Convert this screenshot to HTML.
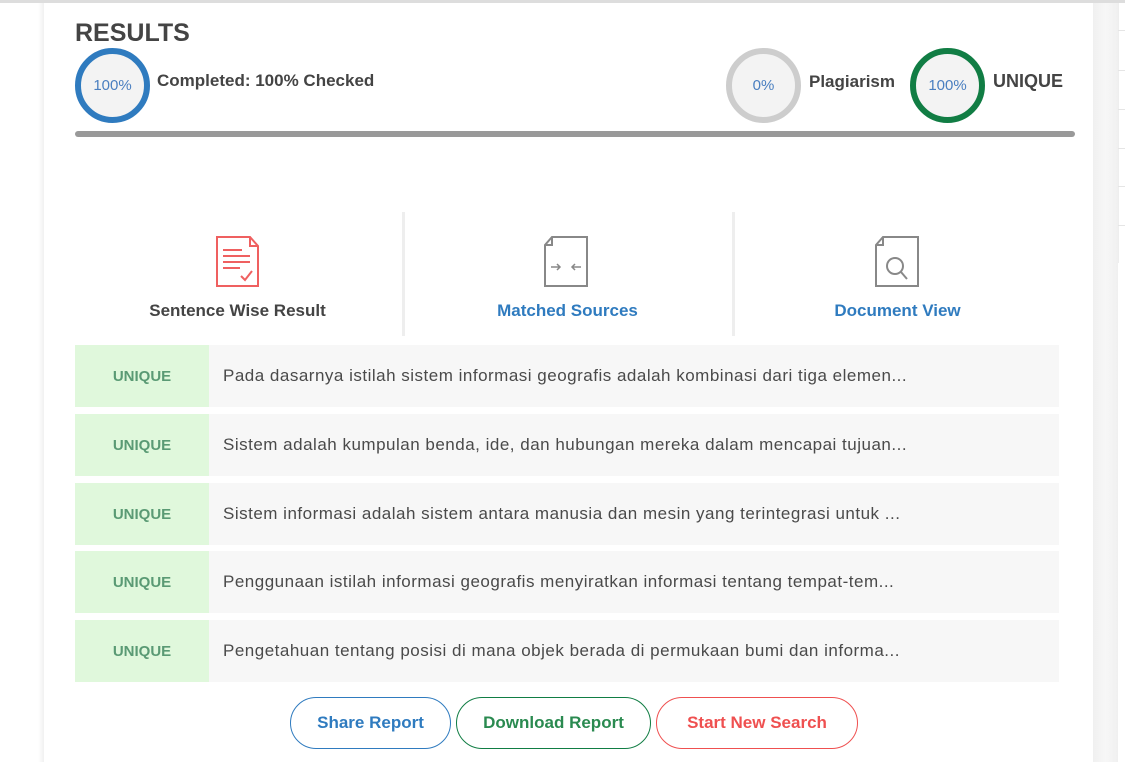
<!DOCTYPE html>
<html><head><meta charset="utf-8"><style>
*{margin:0;padding:0;box-sizing:border-box}
body{width:1125px;height:762px;overflow:hidden;background:#fff;font-family:"Liberation Sans",sans-serif;position:relative;color:#444}
.a{position:absolute}
.circ{position:absolute;border-radius:50%;background:#f3f3f3;color:#4a7fc0;font-size:15px;display:flex;align-items:center;justify-content:center}
.lbl{position:absolute;font-weight:bold;font-size:17px;color:#444}
.row{position:absolute;left:75px;width:984px;height:62px;background:#f7f7f7}
.row .u{position:absolute;left:0;top:0;width:134px;height:62px;background:#e0f8dc;color:#5a9a74;font-weight:bold;font-size:15px;display:flex;align-items:center;justify-content:center}
.row .t{position:absolute;left:148px;top:0;line-height:62px;font-size:17px;letter-spacing:0.5px;color:#4a4a4a;white-space:nowrap}
.btn{position:absolute;top:697px;height:52px;border-radius:26px;border:1px solid;font-weight:bold;font-size:17px;display:flex;align-items:center;justify-content:center;background:#fff}
.tab{position:absolute;top:301px;font-size:17px;font-weight:bold;text-align:center}
</style></head><body>
<div class="a" style="left:0;top:0;width:1125px;height:3px;background:#ddd"></div>
<div class="a" style="left:38px;top:3px;width:6px;height:759px;background:linear-gradient(90deg,#fff,#f1f1f1)"></div>
<div class="a" style="left:1093px;top:3px;width:25px;height:759px;background:linear-gradient(90deg,#f0f0f0,#f7f7f7,#f0f0f0)"></div>
<div class="a" style="left:1118px;top:3px;width:7px;height:260px;border-left:1px solid #eee"></div>
<div class="a" style="left:1118px;top:30px;width:7px;height:1px;background:#e5e5e5"></div>
<div class="a" style="left:1118px;top:70px;width:7px;height:1px;background:#e5e5e5"></div>
<div class="a" style="left:1118px;top:109px;width:7px;height:1px;background:#e5e5e5"></div>
<div class="a" style="left:1118px;top:148px;width:7px;height:1px;background:#e5e5e5"></div>
<div class="a" style="left:1118px;top:186px;width:7px;height:1px;background:#e5e5e5"></div>
<div class="a" style="left:1118px;top:225px;width:7px;height:1px;background:#e5e5e5"></div>

<div class="a" style="left:75px;top:19px;font-size:25px;font-weight:bold;color:#444">RESULTS</div>
<div class="circ" style="left:75px;top:48px;width:75px;height:75px;border:6px solid #2f7bbf">100%</div>
<div class="lbl" style="left:157px;top:71px">Completed: 100% Checked</div>
<div class="circ" style="left:726px;top:48px;width:75px;height:75px;border:6px solid #cdcdcd">0%</div>
<div class="lbl" style="left:809px;top:72px">Plagiarism</div>
<div class="circ" style="left:910px;top:48px;width:75px;height:75px;border:6px solid #117d44">100%</div>
<div class="lbl" style="left:993px;top:71px;font-size:18px">UNIQUE</div>
<div class="a" style="left:75px;top:131px;width:1000px;height:6px;border-radius:3px;background:#999"></div>

<div class="a" style="left:402px;top:212px;width:3px;height:124px;background:#eee"></div>
<div class="a" style="left:732px;top:212px;width:3px;height:124px;background:#eee"></div>

<svg class="a" style="left:214px;top:236px" width="46" height="52" viewBox="0 0 46 52" fill="none" stroke="#ef6060" stroke-width="2">
<path d="M3 1H36L44 10V50H3Z"/><path d="M36 1V10H44"/>
<path d="M9 14H28M9 20H36M9 26H36M9 32H26M27 40L31 44L38 35"/></svg>
<svg class="a" style="left:543px;top:236px" width="46" height="52" viewBox="0 0 46 52" fill="none" stroke="#888" stroke-width="2">
<path d="M9 1H44V50H2V9Z"/><path d="M9 1V9H2"/>
<path d="M8 31H17M14 28L17 31L14 34M38 31H29M32 28L29 31L32 34" stroke-width="1.5"/></svg>
<svg class="a" style="left:874px;top:236px" width="46" height="52" viewBox="0 0 46 52" fill="none" stroke="#888" stroke-width="2">
<path d="M9 1H44V50H2V9Z"/><path d="M9 1V9H2"/>
<circle cx="21" cy="30" r="8"/><path d="M27 36L33 43"/></svg>

<div class="tab" style="left:105px;width:265px;color:#444">Sentence Wise Result</div>
<div class="tab" style="left:435px;width:265px;color:#2f7bbf">Matched Sources</div>
<div class="tab" style="left:765px;width:265px;color:#2f7bbf">Document View</div>

<div class="row" style="top:345px"><div class="u">UNIQUE</div><div class="t">Pada dasarnya istilah sistem informasi geografis adalah kombinasi dari tiga elemen...</div></div>
<div class="row" style="top:414px"><div class="u">UNIQUE</div><div class="t">Sistem adalah kumpulan benda, ide, dan hubungan mereka dalam mencapai tujuan...</div></div>
<div class="row" style="top:483px"><div class="u">UNIQUE</div><div class="t">Sistem informasi adalah sistem antara manusia dan mesin yang terintegrasi untuk ...</div></div>
<div class="row" style="top:551px"><div class="u">UNIQUE</div><div class="t">Penggunaan istilah informasi geografis menyiratkan informasi tentang tempat-tem...</div></div>
<div class="row" style="top:620px"><div class="u">UNIQUE</div><div class="t">Pengetahuan tentang posisi di mana objek berada di permukaan bumi dan informa...</div></div>

<div class="btn" style="left:290px;width:161px;border-color:#2f7bbf;color:#2f7bbf">Share Report</div>
<div class="btn" style="left:456px;width:195px;border-color:#117d44;color:#2a8a50">Download Report</div>
<div class="btn" style="left:656px;width:202px;border-color:#ef5050;color:#ef5050">Start New Search</div>
</body></html>
